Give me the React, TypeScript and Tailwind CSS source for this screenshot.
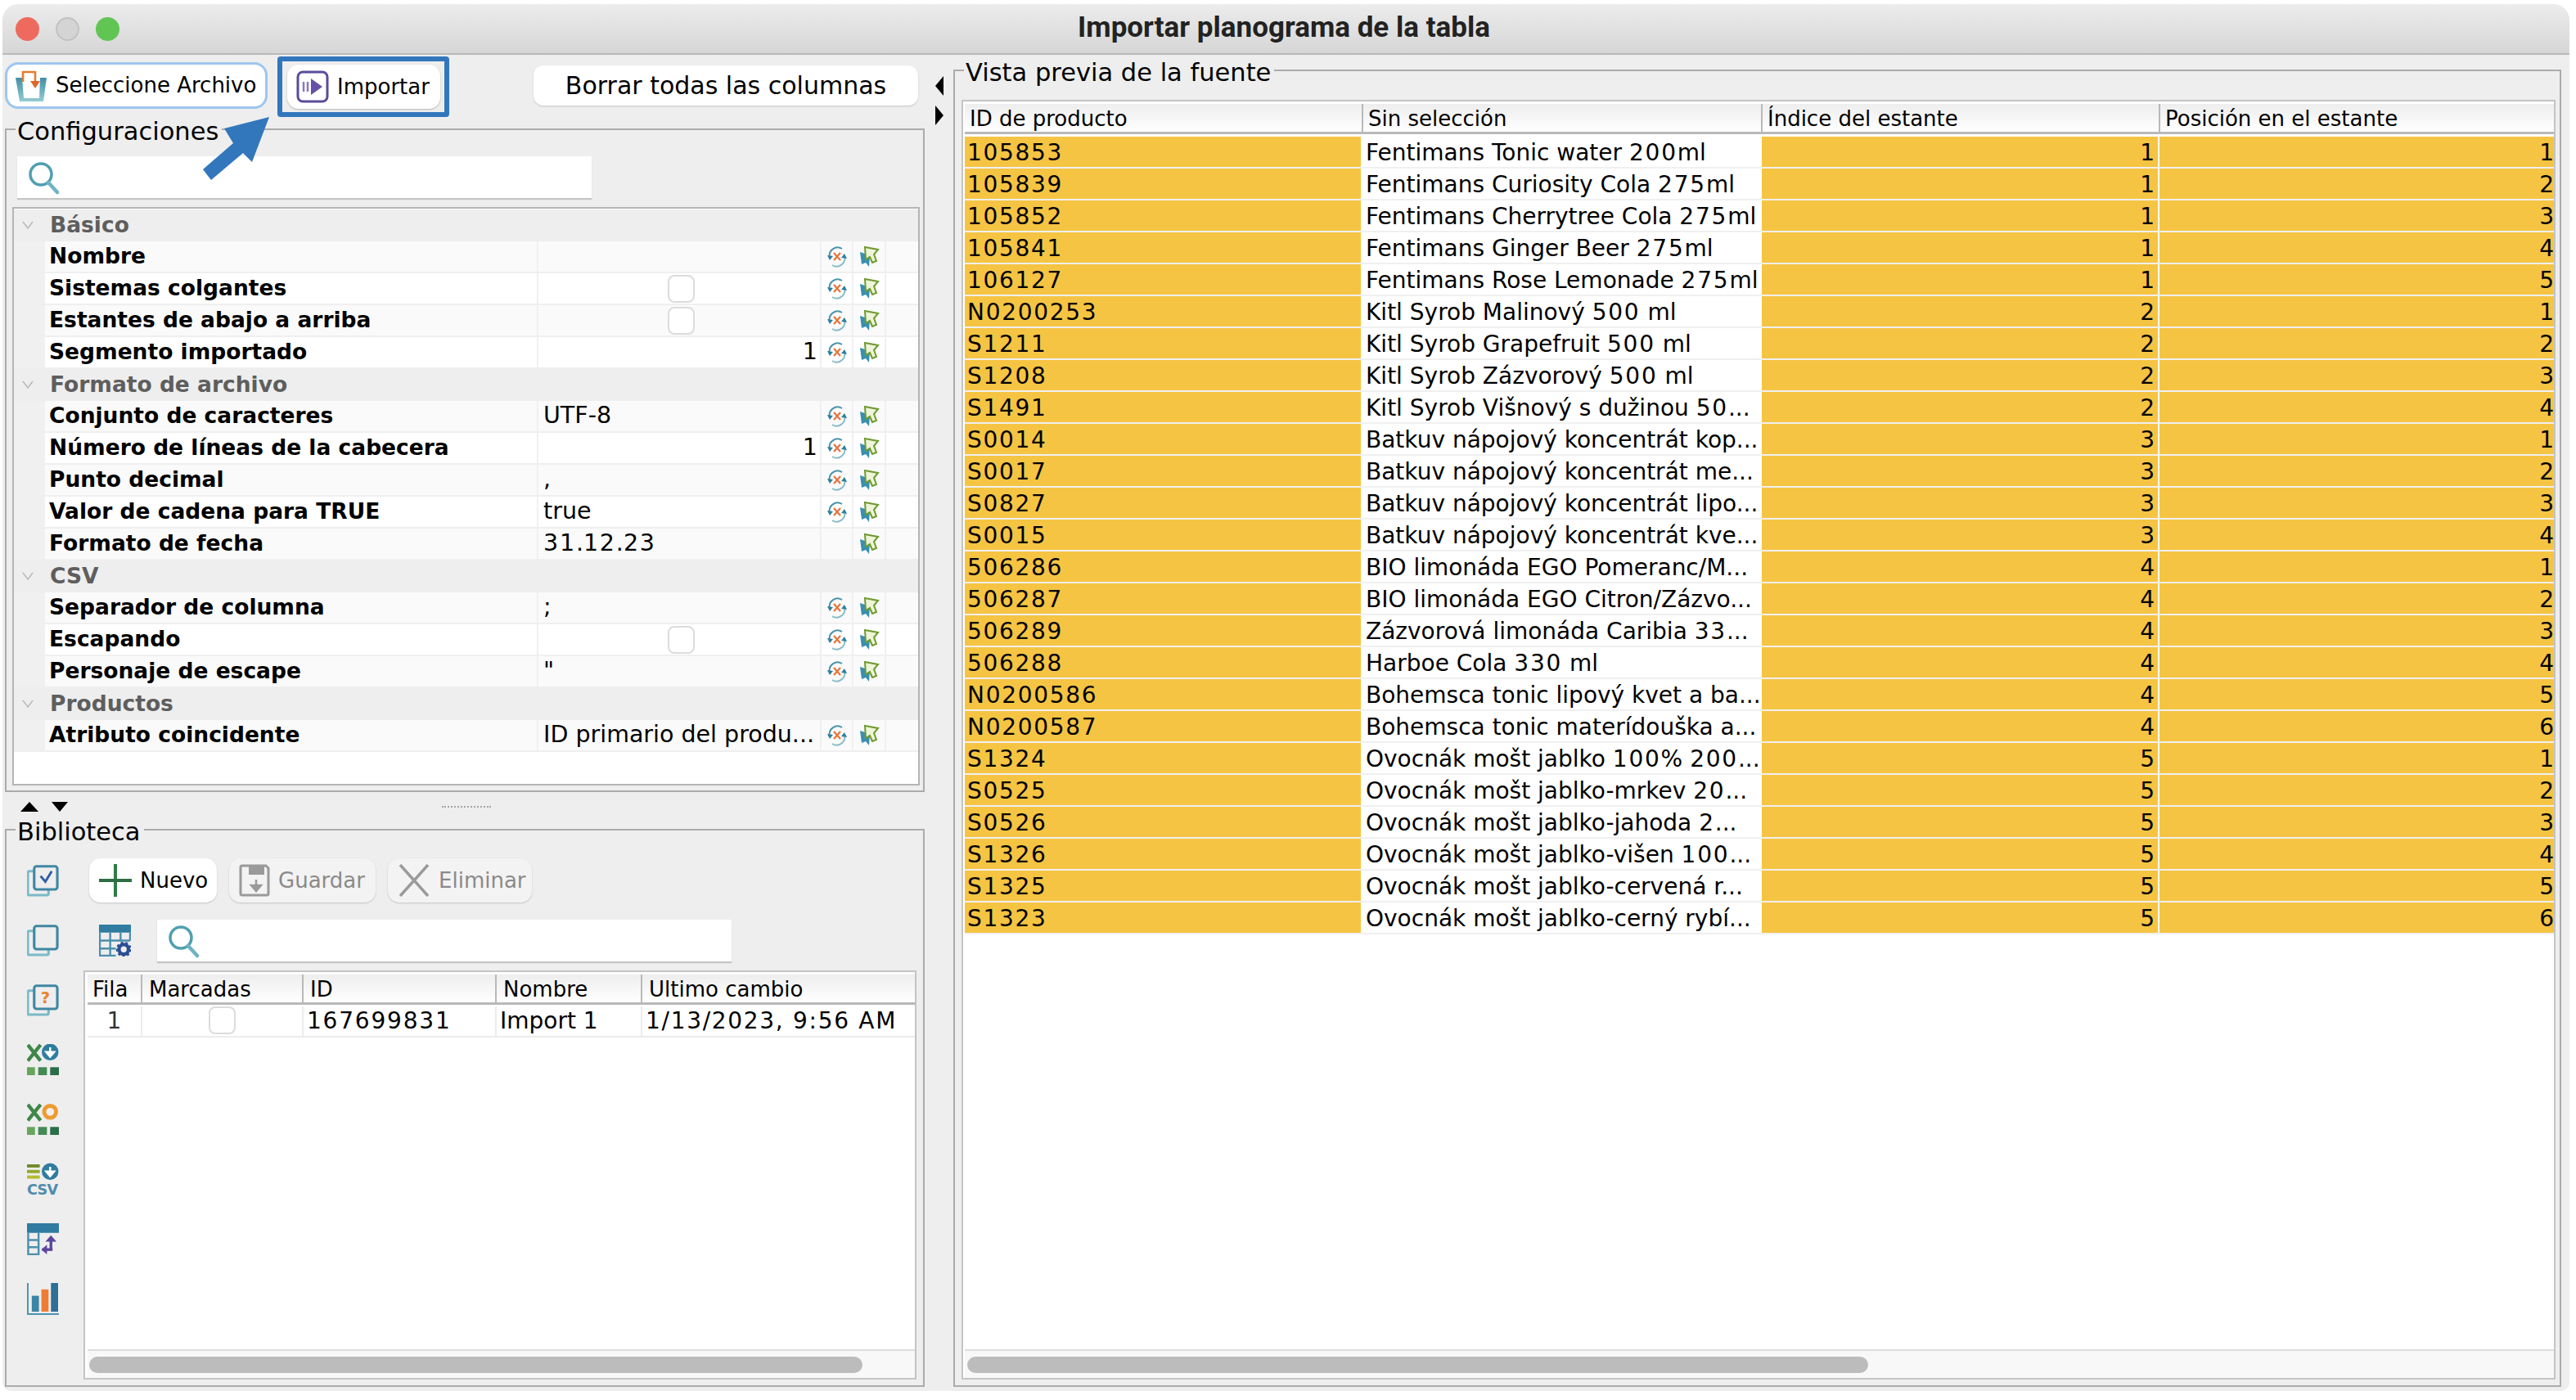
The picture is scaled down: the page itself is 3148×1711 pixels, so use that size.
import type { ReactNode } from "react";

const FONT = "font-['DejaVu_Sans',sans-serif]";

const PREVIEW: [string, string, number, number][] = [
  ["105853", "Fentimans Tonic water 200ml", 1, 1],
  ["105839", "Fentimans Curiosity Cola 275ml", 1, 2],
  ["105852", "Fentimans Cherrytree Cola 275ml", 1, 3],
  ["105841", "Fentimans Ginger Beer 275ml", 1, 4],
  ["106127", "Fentimans Rose Lemonade 275ml", 1, 5],
  ["N0200253", "Kitl Syrob Malinový 500 ml", 2, 1],
  ["S1211", "Kitl Syrob Grapefruit 500 ml", 2, 2],
  ["S1208", "Kitl Syrob Zázvorový 500 ml", 2, 3],
  ["S1491", "Kitl Syrob Višnový s dužinou 50...", 2, 4],
  ["S0014", "Batkuv nápojový koncentrát kop...", 3, 1],
  ["S0017", "Batkuv nápojový koncentrát me...", 3, 2],
  ["S0827", "Batkuv nápojový koncentrát lipo...", 3, 3],
  ["S0015", "Batkuv nápojový koncentrát kve...", 3, 4],
  ["506286", "BIO limonáda EGO Pomeranc/M...", 4, 1],
  ["506287", "BIO limonáda EGO Citron/Zázvo...", 4, 2],
  ["506289", "Zázvorová limonáda Caribia 33...", 4, 3],
  ["506288", "Harboe Cola 330 ml", 4, 4],
  ["N0200586", "Bohemsca tonic lipový kvet a ba...", 4, 5],
  ["N0200587", "Bohemsca tonic materídouška a...", 4, 6],
  ["S1324", "Ovocnák mošt jablko 100% 200...", 5, 1],
  ["S0525", "Ovocnák mošt jablko-mrkev 20...", 5, 2],
  ["S0526", "Ovocnák mošt jablko-jahoda 2...", 5, 3],
  ["S1326", "Ovocnák mošt jablko-višen 100...", 5, 4],
  ["S1325", "Ovocnák mošt jablko-cervená r...", 5, 5],
  ["S1323", "Ovocnák mošt jablko-cerný rybí...", 5, 6],
];

type Prop =
  | { group: string }
  | { name: string; value?: string; check?: boolean; num?: string; noReset?: boolean };

const PROPS: Prop[] = [
  { group: "Básico" },
  { name: "Nombre" },
  { name: "Sistemas colgantes", check: true },
  { name: "Estantes de abajo a arriba", check: true },
  { name: "Segmento importado", num: "1" },
  { group: "Formato de archivo" },
  { name: "Conjunto de caracteres", value: "UTF-8" },
  { name: "Número de líneas de la cabecera", num: "1" },
  { name: "Punto decimal", value: "," },
  { name: "Valor de cadena para TRUE", value: "true" },
  { name: "Formato de fecha", value: "31.12.23", noReset: true },
  { group: "CSV" },
  { name: "Separador de columna", value: ";" },
  { name: "Escapando", check: true },
  { name: "Personaje de escape", value: '"' },
  { group: "Productos" },
  { name: "Atributo coincidente", value: "ID primario del produ..." },
];

// the app's font sets digits wider than DejaVu does
function Spaced({ text }: { text: string }) {
  return (
    <>
      {text.split(/(\d+)/).map((part, i) =>
        /\d/.test(part) ? (
          <span key={i} className="tracking-[1.8px]">
            {part}
          </span>
        ) : (
          part
        ),
      )}
    </>
  );
}

function SearchIcon() {
  return (
    <svg width="40" height="42" viewBox="0 0 40 42" fill="none">
      <circle cx="17" cy="17" r="13" stroke="#4f9fb0" strokeWidth="3.5" />
      <path d="M26 27l11 12" stroke="#6fb3c2" strokeWidth="4.5" strokeLinecap="round" />
    </svg>
  );
}

function ResetIcon() {
  return (
    <svg width="26" height="28" viewBox="0 0 26 28" fill="none">
      <path d="M4 15A10 10 0 0 1 19 4" stroke="#4b93ad" strokeWidth="2" />
      <path d="M1 12l3 6 4-5z" fill="#2f7f9f" />
      <path d="M22 13A10 10 0 0 1 7 24" stroke="#86bcc9" strokeWidth="2" />
      <path d="M25 16l-3-6-4 5z" fill="#2f7f9f" />
      <path d="M9 9l8 9M17 9l-8 9" stroke="#e9743a" strokeWidth="2.2" />
    </svg>
  );
}

function PickIcon() {
  return (
    <svg width="26" height="28" viewBox="0 0 26 28">
      <path d="M2 8l12 4-1 14-4-5-5 2z" fill="#3a8fb0" />
      <path d="M8 2l16 3-5 6 3 8-5 2-3-7-5 3z" fill="#eef5d8" stroke="#6e9a2e" strokeWidth="2" />
    </svg>
  );
}

function SelectFileIcon() {
  return (
    <svg width="38" height="38" viewBox="0 0 38 38" fill="none">
      <defs>
        <linearGradient id="boxFill" x1="0" y1="0" x2="0" y2="1">
          <stop offset="0" stopColor="#3f8fa8" />
          <stop offset="1" stopColor="#93cbd2" />
        </linearGradient>
      </defs>
      <path d="M0 9h38l-4 29H5z" fill="url(#boxFill)" />
      <path d="M8 9h22l-1 25H10z" fill="#ffffff" />
      <path d="M9 14V2h15v12" stroke="#e57b2f" strokeWidth="2.6" />
      <path d="M18 13h12l-6 9z" fill="#e0662a" />
    </svg>
  );
}

function ImportIcon() {
  return (
    <svg width="40" height="40" viewBox="0 0 40 40" fill="none">
      <rect x="2" y="2" width="36" height="36" rx="6" stroke="#5b4a9a" strokeWidth="3" />
      <path d="M9 14v12M14 14v12" stroke="#8a78c2" strokeWidth="2.5" />
      <path d="M18 10l14 10-14 10z" fill="#6650a8" />
    </svg>
  );
}

function PlusIcon() {
  return (
    <svg width="40" height="40" viewBox="0 0 40 40">
      <path d="M18 0h4v40h-4z" fill="#2f7c48" />
      <path d="M0 18h40v4H0z" fill="#2f6e42" />
    </svg>
  );
}

function SaveIcon() {
  return (
    <svg width="38" height="40" viewBox="0 0 38 40" fill="none">
      <path d="M2 4a2 2 0 0 1 2-2h29l3 3v31a2 2 0 0 1-2 2H4a2 2 0 0 1-2-2z" stroke="#9a9a9a" strokeWidth="3" />
      <path d="M12 2h19v11H12z" fill="#9a9a9a" />
      <path d="M21 19v12M15 26l6 7 6-7z" stroke="#9a9a9a" strokeWidth="2.5" fill="#9a9a9a" />
    </svg>
  );
}

function CrossIcon() {
  return (
    <svg width="40" height="40" viewBox="0 0 40 40">
      <path d="M3 1l34 38M37 1L3 39" stroke="#9a9a9a" strokeWidth="3.5" />
    </svg>
  );
}

function StackIcon({ children }: { children?: ReactNode }) {
  return (
    <svg width="39" height="39" viewBox="0 0 40 40" fill="none">
      <path d="M8 8H3a2 2 0 0 0-2 2v26a2 2 0 0 0 2 2h22a2 2 0 0 0 2-2v-4" stroke="#7bbac9" strokeWidth="3.2" />
      <rect x="9" y="1.8" width="29" height="29" rx="3" stroke="#3f87a3" strokeWidth="3.2" fill="#eeeeee" />
      {children}
    </svg>
  );
}

function XlsIcon({ children }: { children: ReactNode }) {
  return (
    <svg width="39" height="39" viewBox="0 0 40 40">
      <path d="M1 1l16 20M17 1L1 21" stroke="#3f8748" strokeWidth="4.5" />
      {children}
      <path d="M0 29h10v10H0z" fill="#66a65b" />
      <path d="M14 29h11v10H14z" fill="#458a55" />
      <path d="M29 29h11v10H29z" fill="#2a6d49" />
    </svg>
  );
}

function DownCircle({ cx, cy }: { cx: number; cy: number }) {
  return (
    <g>
      <circle cx={cx} cy={cy} r="10.5" fill="#2f7d9f" />
      <path d={`M${cx} ${cy - 6}v7M${cx - 5} ${cy}l5 6 5-6z`} stroke="#fff" strokeWidth="2.5" fill="#fff" />
    </g>
  );
}

function TableGearIcon() {
  return (
    <svg width="39" height="39" viewBox="0 0 40 40" fill="none">
      <path d="M0 0h40v10H0z" fill="#2f7ca0" />
      <path d="M1 10v29h20M1 20h38M1 30h20M14 10v29M27 10v10M39 10v10" stroke="#4c8fae" strokeWidth="2.5" />
      <circle cx="31" cy="31" r="6" stroke="#2a4f96" strokeWidth="4.5" />
      <circle cx="31" cy="31" r="8.5" stroke="#2a4f96" strokeWidth="2.5" strokeDasharray="3 3" />
    </svg>
  );
}

function SideIcons() {
  return (
    <div className="mt-[8px] flex w-[39px] flex-col gap-[34px]">
      <StackIcon>
        <path d="M17 14l6 7 8-13" stroke="#2f5fa8" strokeWidth="3" />
      </StackIcon>
      <StackIcon />
      <StackIcon>
        <text x="23" y="24" textAnchor="middle" fontSize="20" fontWeight="700" fill="#e8832f" fontFamily="DejaVu Sans">?</text>
      </StackIcon>
      <XlsIcon>
        <DownCircle cx={29} cy={10} />
      </XlsIcon>
      <XlsIcon>
        <circle cx="29" cy="10" r="7.5" fill="none" stroke="#ef9a2f" strokeWidth="5" />
      </XlsIcon>
      <svg className="overflow-visible" width="39" height="39" viewBox="0 0 40 40">
        <path d="M0 1h16v4H0z" fill="#6f8a28" />
        <path d="M0 8h16v4H0z" fill="#95a82c" />
        <path d="M0 15h16v4H0z" fill="#b5bd30" />
        <DownCircle cx={29} cy={10} />
        <text x="0" y="39" fontSize="18" fontWeight="700" fill="#4f8cab" fontFamily="DejaVu Sans" textLength="39">CSV</text>
      </svg>
      <svg width="39" height="39" viewBox="0 0 40 40" fill="none">
        <path d="M0 0h40v12H0z" fill="#2f7ca0" />
        <path d="M1.5 12v27h13V12M1.5 21h13M1.5 30h13" stroke="#4c8fae" strokeWidth="2.5" />
        <path d="M30 33V20" stroke="#5c469c" strokeWidth="3.5" />
        <path d="M23 23l7-8 7 8z" fill="#5c469c" />
        <path d="M19 33h13" stroke="#5c469c" strokeWidth="3.5" />
        <path d="M25 27l-7 6 7 6z" fill="#5c469c" />
      </svg>
      <svg width="39" height="39" viewBox="0 0 40 40">
        <path d="M0 0h2v38h38v2H0z" fill="#4c93ae" />
        <path d="M6 16h9v20H6z" fill="#3c85a6" />
        <path d="M18 8h9v28h-9z" fill="#ee7d33" />
        <path d="M30 0h9v36h-9z" fill="#2f6f96" />
      </svg>
    </div>
  );
}

function Checkbox() {
  return <span className="block h-[34px] w-[33px] rounded-[8px] border-2 border-[#dcdcdc] bg-white" />;
}

function Group({ title, className, children }: { title: string; className: string; children: ReactNode }) {
  return (
    <section className={`relative border-2 border-[#ababab] ${className}`}>
      <h2 className="absolute left-[11px] top-[-17px] bg-[#eeeeee] pr-1 pl-[2px] text-[30.5px] leading-[38px] font-normal text-black">
        {title}
      </h2>
      {children}
    </section>
  );
}

function SearchBox({ className }: { className: string }) {
  return (
    <div className={`flex items-center bg-white pl-[12px] shadow-[0_2px_1px_#c4c4c4] ${className}`}>
      <SearchIcon />
    </div>
  );
}

function ToolButton({ label, icon, off, className }: { label: string; icon: ReactNode; off?: boolean; className: string }) {
  return (
    <button
      className={`flex h-[54px] items-center gap-[10px] rounded-[14px] pl-[12px] text-[26px] shadow-[0_1px_2px_#c4c4c4] ${
        off ? "bg-[#f3f3f3] text-[#8a8a8a]" : "bg-white text-black"
      } ${className}`}
    >
      {icon}
      {label}
    </button>
  );
}

function PropertyTable() {
  let odd = false;
  return (
    <div className="ml-[7px] mr-[4px] mt-[11px] h-[707px] border-2 border-[#b5b5b5] bg-white pt-[1px]">
      {PROPS.map((p, i) => {
        if ("group" in p) {
          odd = false;
          return (
            <div key={i} className="flex h-[39px] items-center bg-[#eeeeee] pb-[2px] text-[26.5px] font-bold text-[#5e5e5e]">
              <svg className="ml-[10px] mr-[20px]" width="14" height="10" viewBox="0 0 14 10" fill="none">
                <path d="M1 1l6 8 6-8" stroke="#b9b9b9" strokeWidth="1.5" />
              </svg>
              <span>{p.group}</span>
            </div>
          );
        }
        odd = !odd;
        return (
          <div
            key={i}
            className={`flex h-[39px] border-b-2 border-[#efefef] text-black ${odd ? "bg-[#fafafa]" : "bg-white"}`}
          >
            <div className="w-[38px] bg-[#f0f0f0]" />
            <div className="flex w-[603px] items-center border-r-2 border-[#f0f0f0] pb-[1px] pl-[5px] text-[26.5px] font-bold whitespace-nowrap">{p.name}</div>
            <div className={`flex w-[346px] items-center border-r-2 border-[#f0f0f0] pl-[6px] text-[28.5px] whitespace-nowrap ${p.check ? "justify-center pr-[2px]" : ""} ${p.num ? "justify-end pr-[3px]" : ""}`}>
              {p.check ? <Checkbox /> : p.num ?? <Spaced text={p.value ?? ""} />}
            </div>
            <div className="flex w-[39px] items-center justify-center border-r-2 border-[#f0f0f0]">
              {!p.noReset && <ResetIcon />}
            </div>
            <div className="flex w-[40px] items-center justify-center border-r-2 border-[#f0f0f0]">
              <PickIcon />
            </div>
          </div>
        );
      })}
    </div>
  );
}

function HeaderCell({ label, className }: { label: string; className: string }) {
  return (
    <div className={`flex h-full items-center border-r-2 border-[#b9b9b9] pt-[2px] last:border-r-0 ${className}`}>
      {label}
    </div>
  );
}

function Scrollbar({ className }: { className: string }) {
  return (
    <div className="mt-auto h-[35px] border-t-2 border-[#dddddd] bg-[#f8f8f8] pt-[7px]">
      <div className={`h-[20px] rounded-full bg-[#bcbcbc] ${className}`} />
    </div>
  );
}

function LibraryTable() {
  return (
    <div className="flex h-[500px] w-[1018px] flex-col border-2 border-[#c4c4c4] bg-white pl-[3px] pt-[3px]">
      <div className="flex h-[37px] shrink-0 border-b-[3px] border-[#b9b9b9] bg-gradient-to-b from-[#eeeeee] to-white text-[26px] text-black">
        <HeaderCell label="Fila" className="w-[67px] pl-[6px]" />
        <HeaderCell label="Marcadas" className="w-[197px] pl-[8px]" />
        <HeaderCell label="ID" className="w-[236px] pl-[8px]" />
        <HeaderCell label="Nombre" className="w-[178px] pl-[8px]" />
        <HeaderCell label="Ultimo cambio" className="flex-1 pl-[8px]" />
      </div>
      <div className="flex h-[40px] shrink-0 border-b-2 border-[#ececec] pt-[2px] text-[28px] text-black">
        <div className="flex w-[67px] items-center justify-center border-r-2 border-[#ececec] font-normal text-[#333]">1</div>
        <div className="flex w-[197px] items-center justify-center border-r-2 border-[#ececec] pb-[2px]">
          <Checkbox />
        </div>
        <div className="flex w-[236px] items-center border-r-2 border-[#ececec] pl-[4px] tracking-[1.8px]">167699831</div>
        <div className="flex w-[178px] items-center border-r-2 border-[#ececec] pl-[4px]">Import 1</div>
        <div className="flex flex-1 items-center pl-[4px] tracking-[1.7px] whitespace-nowrap">1/13/2023, 9:56 AM</div>
      </div>
      <Scrollbar className="ml-[2px] w-[945px]" />
    </div>
  );
}

function PreviewTable() {
  return (
    <div className="ml-[8px] mr-[5px] mt-[35px] flex h-[1564px] flex-col border-2 border-[#c4c4c4] bg-white pl-[2px] pt-[3px]">
      <div className="flex h-[37px] shrink-0 border-b-[3px] border-[#b9b9b9] bg-gradient-to-b from-[#eeeeee] to-white text-[26px] text-black">
        <HeaderCell label="ID de producto" className="w-[487px] pl-[6px]" />
        <HeaderCell label="Sin selección" className="w-[488px] pl-[6px]" />
        <HeaderCell label="Índice del estante" className="w-[486px] pl-[6px]" />
        <HeaderCell label="Posición en el estante" className="flex-1 pl-[6px]" />
      </div>
      <div className="mt-[3px] flex flex-col text-[28px] leading-none text-black">
        {PREVIEW.map(([id, name, shelf, pos]) => (
          <div key={id} className="grid h-[39px] grid-cols-[486px_488px_486px_1fr] border-b-2 border-[#f0f0f0] whitespace-nowrap">
            <div className="flex items-center border-r-2 border-white bg-[#f5c443] pl-[3px] pt-[3px] tracking-[1.7px]">{id}</div>
            <div className="flex items-center border-r-2 border-white pl-[4px] pt-[3px]">
              <span><Spaced text={name} /></span>
            </div>
            <div className="flex items-center justify-end border-r-2 border-white bg-[#f5c443] pr-[4px] pt-[3px]">{shelf}</div>
            <div className="flex items-center justify-end bg-[#f5c443] pt-[3px]">{pos}</div>
          </div>
        ))}
      </div>
      <Scrollbar className="ml-[3px] w-[1101px]" />
    </div>
  );
}

export default function App() {
  return (
    <div className={`relative h-[1711px] w-[3148px] overflow-hidden bg-white pb-[11px] pl-[3px] pr-[8px] pt-[5px] ${FONT}`}>
      <div className="flex h-full flex-col rounded-b-[10px] rounded-t-[20px] bg-[#eeeeee]">
        <header className="grid h-[62px] shrink-0 grid-cols-[1fr_auto_1fr] items-center rounded-t-[20px] border-b-2 border-[#b9b9b9] bg-gradient-to-b from-[#ececec] to-[#d6d6d6] pl-[16px]">
          <div className="flex gap-[20px]">
            <span className="h-[29px] w-[29px] rounded-full bg-[#ee6a5e]" />
            <span className="h-[29px] w-[29px] rounded-full border-2 border-[#c2c2c2] bg-[#d4d4d4]" />
            <span className="h-[29px] w-[29px] rounded-full bg-[#61c554]" />
          </div>
          <h1 className="pb-[3px] pr-[21px] font-['Roboto',sans-serif] text-[35px] leading-[44px] font-bold text-[#222222]">Importar planograma de la tabla</h1>
          <div />
        </header>

        <div className="flex min-h-0 flex-1">
          <div className="flex w-[1127px] shrink-0 flex-col pl-[3px]">
            <div className="flex h-[90px] shrink-0 items-start pt-[9px]">
              <button className="flex h-[57px] w-[321px] shrink-0 items-center gap-[11px] rounded-[16px] border-[3px] border-[#9dc6ee] bg-white pl-[10px] text-[26px] text-black">
                <SelectFileIcon />
                Seleccione Archivo
              </button>
              <div className="ml-[12px] mt-[-7px] shrink-0 rounded-[4px] border-[6px] border-[#3277bc] py-[4px] pl-[6px] pr-[5px]">
                <button className="flex h-[54px] w-[187px] items-center gap-[10px] rounded-[14px] bg-white pl-[11px] text-[26px] text-black shadow-[0_1px_2px_#b5b5b5]">
                  <ImportIcon />
                  Importar
                </button>
              </div>
              <button className="ml-[103px] mt-[4px] h-[49px] w-[470px] shrink-0 rounded-[12px] bg-white text-[30px] text-black shadow-[0_1px_2px_#c4c4c4]">
                Borrar todas las columnas
              </button>
            </div>

            <Group title="Configuraciones" className="h-[811px] shrink-0">
              <SearchBox className="ml-[13px] mt-[32px] h-[51px] w-[702px]" />
              <PropertyTable />
            </Group>

            <div className="flex h-[45px] shrink-0 items-center pl-[19px]">
              <svg width="60" height="14" viewBox="0 0 60 14" className="mb-[10px]">
                <path d="M0 13L11 1l11 12z" fill="#000" />
                <path d="M38 1h20L48 13z" fill="#000" />
              </svg>
              <span className="mb-[10px] ml-[455px] h-[2px] w-[60px] border-t-2 border-dotted border-[#a5a5a5]" />
            </div>

            <Group title="Biblioteca" className="flex h-[682px] shrink-0 gap-[30px] pl-[25px] pt-[34px]">
              <SideIcons />
              <div className="flex flex-col">
                <div className="flex gap-[15px] pl-[7px]">
                  <ToolButton label="Nuevo" icon={<PlusIcon />} className="w-[156px]" />
                  <ToolButton label="Guardar" icon={<SaveIcon />} off className="w-[179px]" />
                  <ToolButton label="Eliminar" icon={<CrossIcon />} off className="w-[176px]" />
                </div>
                <div className="mt-[21px] flex h-[51px] items-center gap-[32px] pl-[19px]">
                  <TableGearIcon />
                  <SearchBox className="h-[51px] w-[702px]" />
                </div>
                <div className="mt-[11px]">
                  <LibraryTable />
                </div>
              </div>
            </Group>
          </div>

          <div className="flex w-[35px] shrink-0 flex-col items-center gap-[12px] pt-[26px]">
            <svg width="10" height="24" viewBox="0 0 10 24"><path d="M10 0v24L0 12z" fill="#000" /></svg>
            <svg width="10" height="24" viewBox="0 0 10 24"><path d="M0 0v24l10-12z" fill="#000" /></svg>
          </div>

          <div className="min-w-0 flex-1 pr-[10px] pt-[18px]">
            <Group title="Vista previa de la fuente" className="h-[1610px]">
              <PreviewTable />
            </Group>
          </div>
        </div>
      </div>

      {/* annotation arrow pointing at the Importar button */}
      <svg className="absolute left-[245px] top-[142px]" width="86" height="80" viewBox="0 0 86 80">
        <path d="M84 1L63 56 52 45 13 78 3 65 40 33 29 15z" fill="#3277bc" />
      </svg>
    </div>
  );
}
